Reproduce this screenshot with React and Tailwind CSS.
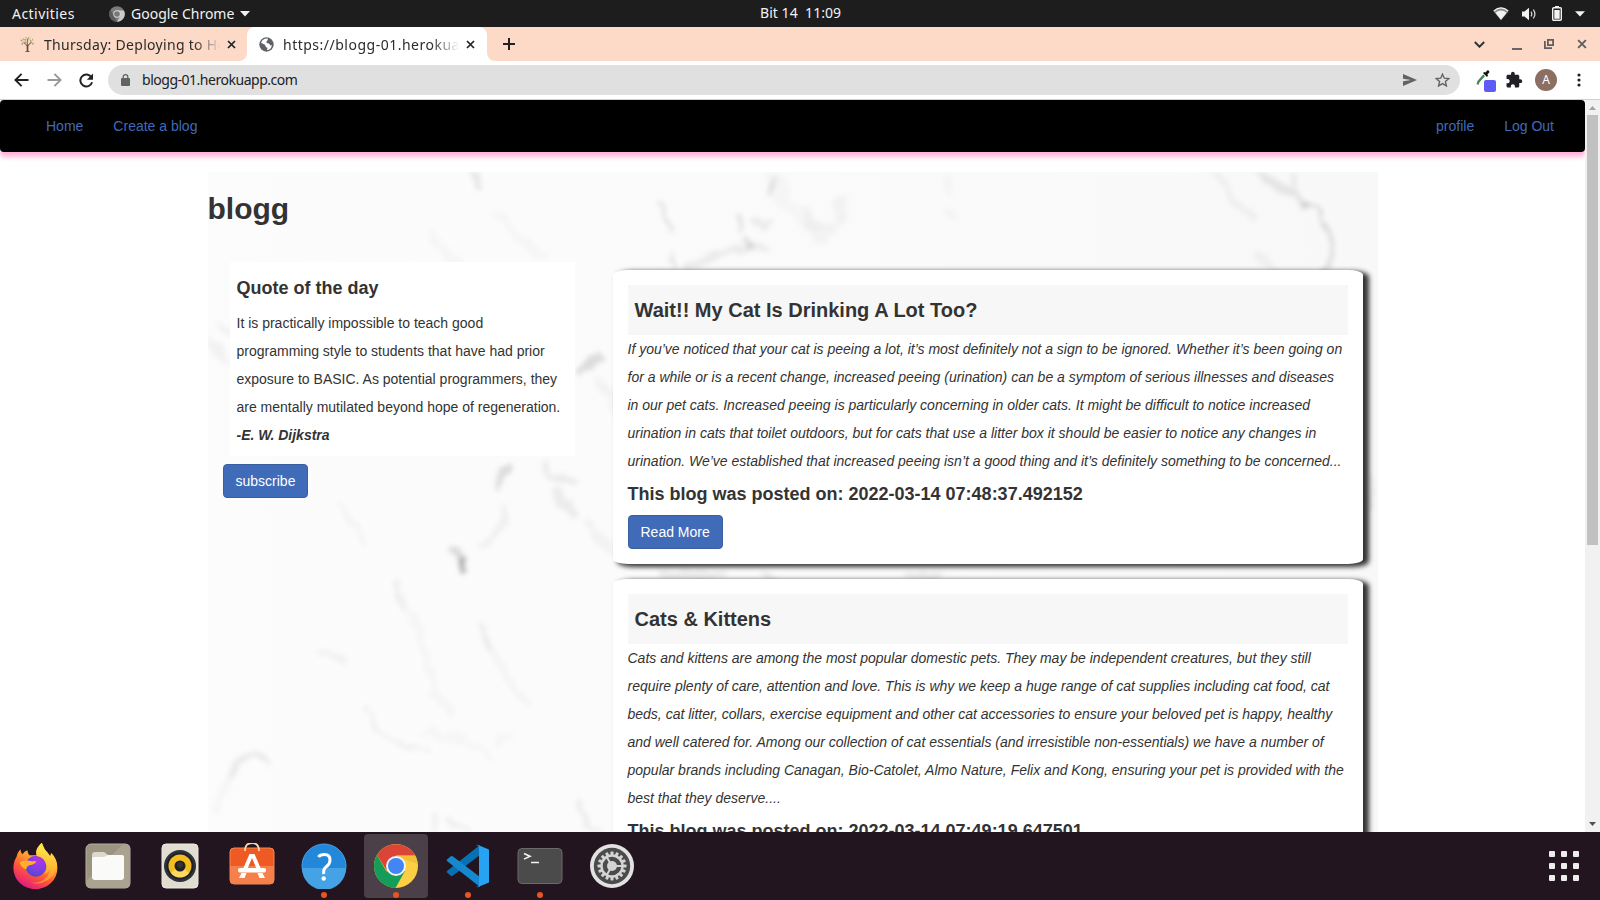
const UI = "font-['Noto_Sans',sans-serif]";

function TopBar() {
  return (
    <div className="relative flex h-[27px] shrink-0 items-center bg-[#1d1d1d] text-[14px] leading-[27px] text-[#f2f2f2]">
      <span className="ml-3 w-[97px] tracking-[0.45px]">Activities</span>
      <svg className="h-4 w-4" viewBox="0 0 16 16">
        <circle cx="8" cy="8" r="7.8" fill="#7b7b7b" />
        <path d="M8 4.4h6.9A7.8 7.8 0 0 1 8 15.8L11.2 10z" fill="#c9c9c9" />
        <path d="M1.4 3.8L4.8 9.8 8 15.8A7.8 7.8 0 0 1 1.4 3.8z" fill="#5c5c5c" />
        <circle cx="8" cy="8" r="3.7" fill="#d8d8d8" />
        <circle cx="8" cy="8" r="2.8" fill="#777" />
      </svg>
      <span className="ml-1.5 w-[106px] whitespace-nowrap">Google Chrome</span>
      <svg className="ml-[3px] h-[6px] w-[10px]" viewBox="0 0 10 6"><path d="M0 0h10L5 5.5z" fill="#f2f2f2" /></svg>
      <span className="absolute left-[760px] top-[-1px] whitespace-pre tracking-[0.05px]">Bit 14  11:09</span>
      <div className="ml-auto flex items-center">
        <svg className="h-[14px] w-[16px]" viewBox="0 0 16 14">
          <path d="M.3 4Q8-3 15.700 4L8 13.200z" fill="#8d8d8d" />
          <path d="M.8 4Q8-2.400 15.200 4" fill="none" stroke="#f2f2f2" strokeWidth="1.200" />
          <path d="M2.400 5.800Q8 1.400 13.600 5.800L8 12.800z" fill="#f2f2f2" />
        </svg>
        <svg className="ml-[13px] h-[14px] w-[15px]" viewBox="0 0 15 14" fill="none">
          <path d="M0 4.500h2.500L7 .8v12.400L2.500 9.500H0z" fill="#f2f2f2" />
          <path d="M9 4.600q1.600 2.400 0 4.800M11.300 2.600q3.200 4.400 0 8.800" stroke="#d0d0d0" strokeWidth="1.300" />
        </svg>
        <svg className="ml-[15px] h-[15px] w-[10px]" viewBox="0 0 10 15">
          <path d="M3 0h4v1.500H3z" fill="#f2f2f2" />
          <rect x=".7" y="1.700" width="8.600" height="12.600" rx="1" fill="none" stroke="#f2f2f2" strokeWidth="1.400" />
          <path d="M2.300 4h5.400v8.800H2.300z" fill="#f2f2f2" />
        </svg>
        <svg className="ml-[13px] mr-[15px] h-[6px] w-[10px]" viewBox="0 0 10 6"><path d="M0 .3h10L5 5.500z" fill="#f2f2f2" /></svg>
      </div>
    </div>
  );
}

function Cross({ className, color = "#222" }) {
  return (
    <svg className={className} viewBox="0 0 9 9"><path d="M1 1l7 7M8 1l-7 7" stroke={color} strokeWidth="1.700" /></svg>
  );
}

function Tabs() {
  return (
    <div className="h-[34px] shrink-0 bg-white text-[14px] text-[#2b2b2b]">
      <div className="flex h-full items-stretch">
        <div className="flex w-[247px] shrink-0 items-center rounded-br-[8px] bg-[#fddac7]">
          <svg className="ml-[20px] h-[16px] w-[16px] shrink-0" viewBox="0 0 16 16" fill="none">
            <path d="M7.500 15.500V8M7.500 10L3.500 6M7.500 10L11.500 6M7.500 8V3" stroke="#8d7a5c" strokeWidth="1.100" />
            <path d="M7.500 15.500V9" stroke="#5d4737" strokeWidth="1.600" />
            <path d="M1 5l3-2M3 8l-2-.5M5 4.500l1.500-3M8 3l2-2M10 5l3-1.500M12 8l2.500-1M6 7l-1-2" stroke="#a9a77a" strokeWidth="2" strokeDasharray="1.500 1" />
            <path d="M5.500 15.500h4" stroke="#6d5743" />
          </svg>
          <div className="ml-2 w-[178px] shrink-0 overflow-hidden whitespace-nowrap tracking-[0.3px] [mask-image:linear-gradient(to_right,#000_150px,transparent_176px)]">Thursday: Deploying to Heroku</div>
          <Cross className="ml-[5px] h-[9px] w-[9px] shrink-0" />
        </div>
        <div className="w-[240px] shrink-0 bg-[#fddac7]">
          <div className="flex h-full items-center rounded-t-[8px] bg-white">
            <svg className="ml-[12px] h-[15px] w-[15px] shrink-0" viewBox="0 0 15 15">
              <circle cx="7.500" cy="7.500" r="7.200" fill="#5f6368" />
              <path d="M5.800 1.800L9 1.600 9 3.500 7.500 4.600 7.600 6 10 6.500 11.500 8.500 13 8.200Q12.500 11 10.300 12.600L8 13.200 8.500 11 6.700 9.700 6 7.800 2 5.800Q3 2.800 5.800 1.800z" fill="#fff" />
              <path d="M9 1.600l3.300 2.300.9 3-1.700.4L9.800 5.500 8 5z" fill="#5f6368" />
            </svg>
            <div className="ml-[9px] w-[176px] shrink-0 overflow-hidden whitespace-nowrap tracking-[0.5px] [mask-image:linear-gradient(to_right,#000_148px,transparent_176px)]">https://blogg-01.herokuapp.com</div>
            <Cross className="ml-[7px] h-[9px] w-[9px] shrink-0" />
          </div>
        </div>
        <div className="flex flex-1 items-center rounded-bl-[8px] bg-[#fddac7]">
          <svg className="ml-[16px] h-[12px] w-[12px]" viewBox="0 0 12 12"><path d="M6 0v12M0 6h12" stroke="#222" strokeWidth="2" /></svg>
          <svg className="ml-auto h-[7px] w-[11px]" viewBox="0 0 11 7" fill="none"><path d="M.8 1l4.700 4.700L10.200 1" stroke="#333" strokeWidth="2" /></svg>
          <span className="ml-[27px] mt-[9px] h-[2px] w-[10px] bg-[#666]" />
          <svg className="ml-[22px] h-[10px] w-[10px]" viewBox="0 0 10 10" fill="none" stroke="#5f5f5f" strokeWidth="1.800"><path d="M3.900.9h5.200v5.200H3.900zM.9 2v7.100H8" /></svg>
          <Cross className="ml-[23px] mr-[13px] h-[10px] w-[10px]" color="#5f5f5f" />
        </div>
      </div>
    </div>
  );
}

function Toolbar() {
  return (
    <div className="flex h-[39px] shrink-0 items-center border-b border-[#cdd0d3] bg-white">
      <svg className="ml-[14px] h-[14px] w-[15px]" viewBox="0 0 15 14" fill="none" stroke="#222" strokeWidth="1.900"><path d="M14.500 7H1.500M7.600.8L1.400 7l6.200 6.200" /></svg>
      <svg className="ml-[18px] h-[14px] w-[15px]" viewBox="0 0 15 14" fill="none" stroke="#999" strokeWidth="1.900"><path d="M.5 7h13M7.400.8L13.600 7l-6.200 6.200" /></svg>
      <svg className="ml-[17px] h-[15px] w-[15px]" viewBox="0 0 15 15"><path d="M12.400 4.200A6 6 0 1 0 13.100 9.300" fill="none" stroke="#222" strokeWidth="2" /><path d="M14 .5v6.300H7.800z" fill="#222" /></svg>
      <div className="ml-[14px] flex h-[30px] w-[1352px] items-center rounded-full bg-[#e0e0e0]">
        <svg className="ml-[13px] h-[12px] w-[9px]" viewBox="0 0 9 12"><rect y="4" width="9" height="8" rx="1" fill="#5f6368" /><path d="M2.200 4.500V3a2.300 2.300 0 0 1 4.600 0v1.500" fill="none" stroke="#5f6368" strokeWidth="1.300" /></svg>
        <span className="ml-[12px] text-[14px] leading-[30px] tracking-[-0.48px] text-[#202124]">blogg-01.herokuapp.com</span>
        <svg className="ml-auto h-[12px] w-[14px]" viewBox="0 0 14 12"><path d="M0 0l14 6-14 6V7.200L8 6 0 4.800z" fill="#5f6368" /></svg>
        <svg className="ml-[18px] mr-[10px] h-[14px] w-[15px]" viewBox="0 0 15 14"><path d="M7.500 1.200l1.800 4 4.500.4-3.400 3 1 4.300-3.900-2.300-3.900 2.300 1-4.300-3.400-3 4.500-.4z" fill="none" stroke="#5f6368" strokeWidth="1.400" /></svg>
      </div>
      <div className="relative ml-[16px] h-[20px] w-[20px]">
        <svg className="h-[16px] w-[14px]" viewBox="0 0 14 16"><path d="M1.600 14.500L2.400 11.600 8 5.300" fill="none" stroke="#5f7a68" strokeWidth="2.200" /><path d="M2 14L3 12 8.500 6" fill="none" stroke="#2c9a4a" strokeWidth="1" /><path d="M7 3l4 4 1-1.500-.6-1 2-2.200Q13.500.2 11.500.3L9.400 2.500 8.300 2z" fill="#111" /></svg>
        <span className="absolute left-[8px] top-[10px] h-[12px] w-[12px] rounded-[2px] bg-[#5e5cf5]" />
      </div>
      <svg className="ml-[9px] h-[18px] w-[18px]" viewBox="0 0 24 24" fill="#202124"><path d="M20.500 11H19V7c0-1.100-.9-2-2-2h-4V3.500a2.500 2.500 0 0 0-5 0V5H4c-1.100 0-1.990.9-1.990 2v3.800H3.500c1.490 0 2.700 1.210 2.700 2.700s-1.210 2.700-2.700 2.700H2V20c0 1.100.9 2 2 2h3.800v-1.500c0-1.490 1.210-2.700 2.700-2.700s2.700 1.210 2.700 2.700V22H17c1.100 0 2-.9 2-2v-4h1.500a2.500 2.500 0 0 0 0-5z" /></svg>
      <span className="ml-[12px] flex h-[22px] w-[22px] items-center justify-center rounded-full bg-[#8d6e63] text-[12px] text-white">A</span>
      <svg className="ml-[20px] h-[14px] w-[4px]" viewBox="0 0 4 14" fill="#222"><circle cx="2" cy="2" r="1.600" /><circle cx="2" cy="7" r="1.600" /><circle cx="2" cy="12" r="1.600" /></svg>
    </div>
  );
}

const VEINS = [
  ["M265 0q3 8 6 12", 8, 0.08],
  ["M226 60q6 20 24 32M290 40q20 24 44 44", 10, 0.02],
  ["M563 8v14", 5, 0.1],
  ["M575 20q14 22 34 36M560 0q8 8 16 30", 14, 0.02],
  ["M531 46v10M535 66l5 8", 5, 0.12],
  ["M545 50l12 4M480 96q20-14 56-20h22", 9, 0.06],
  ["M465 80v18M462 60q-4-20-12-30", 4, 0.1],
  ["M610 60l14-6M632 30v14M600 40l10 30", 12, 0.03],
  ["M742 6v12M740 40l4 6", 10, 0.025],
  ["M1010 4q18 30 34 40M1050 84l20 16", 7, 0.04],
  ["M1048 0q20 12 32 20t18 12", 8, 0.075],
  ["M1086 0v18", 5, 0.06],
  ["M1098 30q18 14 24 34t-6 34", 4, 0.12],
  ["M14 150q10 14 14 18M0 170l20 18", 8, 0.04],
  ["M373 200q8-10 16-16", 7, 0.12],
  ["M390 210q14 10 20 30", 9, 0.03],
  ["M294 318q-4-16 8-22", 5, 0.12],
  ["M334 292q2 14 30 18M350 320l14 20", 9, 0.06],
  ["M296 335q0 20-8 26t-14 12", 7, 0.045],
  ["M244 378q8 6 10 14", 5, 0.12],
  ["M256 390v9", 6, 0.28],
  ["M130 330q12 20 28 38", 6, 0.03],
  ["M190 408q4 24 16 44t14 46 26 44", 8, 0.022],
  ["M191 412q1 14 5 20", 5, 0.04],
  ["M270 450q8 20 16 34t30 44", 7, 0.028],
  ["M270 454q5 14 12 22", 5, 0.045],
  ["M110 482q12-6 28 6", 6, 0.04],
  ["M160 536q8 26 22 34t40 8", 5, 0.04],
  ["M58 590q-20-14-34 12t-16 40", 8, 0.025],
  ["M58 588q-20-10-36 18", 5, 0.06],
  ["M220 560q50 10 60 24M290 570l10-6", 8, 0.02],
  ["M228 644v24M240 648q20 8 30 20M370 630q8 24 24 36", 5, 0.06],
  ["M380 350q20 20 24 30", 8, 0.03],
  ["M455 402h60M555 404h10M700 404h30", 8, 0.06],
  ["M1165 310v26", 8, 0.05],
];

function Marble() {
  return (
    <svg className="absolute inset-0 h-[660px] w-[1170px]" viewBox="0 0 1170 660" fill="none" stroke="#000">
      <defs>
        <filter id="soft" x="0" y="0" width="1170" height="660" filterUnits="userSpaceOnUse">
          <feTurbulence type="fractalNoise" baseFrequency=".05" numOctaves="3" seed="4" result="noise" />
          <feDisplacementMap in="SourceGraphic" in2="noise" scale="16" xChannelSelector="R" yChannelSelector="G" />
          <feGaussianBlur stdDeviation="2.800" />
        </filter>
        <linearGradient id="shade"><stop offset="0" stopColor="#fcfcfc" /><stop offset=".6" stopColor="#fafafa" /><stop offset="1" stopColor="#f8f8f8" /></linearGradient>
      </defs>
      <rect width="1170" height="660" fill="url(#shade)" stroke="none" />
      <g filter="url(#soft)" strokeLinecap="round">
        {VEINS.map(([d, w, o]) => <path key={d} d={d} strokeWidth={w} strokeOpacity={o} />)}
      </g>
    </svg>
  );
}

const BUTTON = "inline-block h-[34px] rounded-[4px] border border-[#3a5f9f] bg-[#406bb8] px-3 py-1.5 text-[14px] leading-5 text-white";

function Post({ title, lines, date }) {
  return (
    <article className="mb-[15px] rounded-[15px/5px] bg-white p-[15px] shadow-[5px_2px_5px_1px_#333]">
      <h3 className="h-[50px] bg-[#f7f7f7] px-[7px] text-[20px] font-bold leading-[50px]">{title}</h3>
      <p className="text-[14px] italic leading-[28px]">
        {lines.map((line) => <span key={line} className="block whitespace-nowrap">{line}</span>)}
      </p>
      <h4 className="my-[9px] text-[18px] font-bold leading-[20px]">This blog was posted on: {date}</h4>
      <button className={BUTTON + " mt-[2px] block"}>Read More</button>
    </article>
  );
}

const POSTS = [
  {
    title: "Wait!! My Cat Is Drinking A Lot Too?",
    date: "2022-03-14 07:48:37.492152",
    lines: [
      "If you’ve noticed that your cat is peeing a lot, it’s most definitely not a sign to be ignored. Whether it’s been going on",
      "for a while or is a recent change, increased peeing (urination) can be a symptom of serious illnesses and diseases",
      "in our pet cats. Increased peeing is particularly concerning in older cats. It might be difficult to notice increased",
      "urination in cats that toilet outdoors, but for cats that use a litter box it should be easier to notice any changes in",
      "urination. We’ve established that increased peeing isn’t a good thing and it’s definitely something to be concerned...",
    ],
  },
  {
    title: "Cats & Kittens",
    date: "2022-03-14 07:49:19.647501",
    lines: [
      "Cats and kittens are among the most popular domestic pets. They may be independent creatures, but they still",
      "require plenty of care, attention and love. This is why we keep a huge range of cat supplies including cat food, cat",
      "beds, cat litter, collars, exercise equipment and other cat accessories to ensure your beloved pet is happy, healthy",
      "and well catered for. Among our collection of cat essentials (and irresistible non-essentials) we have a number of",
      "popular brands including Canagan, Bio-Catolet, Almo Nature, Felix and Kong, ensuring your pet is provided with the",
      "best that they deserve....",
    ],
  },
];

function Page() {
  return (
    <div className="flex h-[732px] shrink-0 overflow-hidden bg-white font-['Liberation_Sans',Arial,sans-serif] text-[#333]">
      <div className="h-full w-[1585px] overflow-hidden">
        <nav className="flex h-[52px] items-center rounded-[4px] bg-black px-[31px] text-[14px] text-[#406bb8] shadow-[0_5px_5px_#ffb3d9]">
          <a className="px-[15px]">Home</a>
          <a className="px-[15px]">Create a blog</a>
          <a className="ml-auto px-[15px]">profile</a>
          <a className="pl-[15px]">Log Out</a>
        </nav>
        <main className="relative mx-auto mt-[20px] h-[660px] w-[1170px]">
          <Marble />
          <div className="relative">
            <h1 className="h-[90px] pt-[20px] text-[30px] font-bold leading-[33px]">blogg</h1>
            <div className="flex items-start">
              <aside className="w-[367px]">
                <div className="ml-[22px] h-[194px] w-[345px] bg-white px-[7px] pt-[16px]">
                  <h4 className="text-[18px] font-bold leading-[20px]">Quote of the day</h4>
                  <p className="mt-[11px] text-[14px] leading-[28px]">It is practically impossible to teach good<br />programming style to students that have had prior<br />exposure to BASIC. As potential programmers, they<br />are mentally mutilated beyond hope of regeneration.</p>
                  <p className="text-[14px] font-bold italic leading-[28px]">-E. W. Dijkstra</p>
                </div>
                <button className={BUTTON + " ml-[15px] mt-[8px]"}>subscribe</button>
              </aside>
              <section className="ml-[38px] mt-[8px] w-[750px]">
                {POSTS.map((post) => <Post key={post.title} {...post} />)}
              </section>
            </div>
          </div>
        </main>
      </div>
      <div className="flex w-[15px] flex-col items-center bg-[#f1f1f1]">
        <svg className="h-[15px] w-[15px]" viewBox="0 0 15 15"><path d="M4 10h7L7.500 6z" fill="#a3a3a3" /></svg>
        <div className="h-[430px] w-[11px] bg-[#c1c1c1]" />
        <svg className="mt-auto h-[15px] w-[15px]" viewBox="0 0 15 15"><path d="M4 5h7L7.500 9z" fill="#505050" /></svg>
      </div>
    </div>
  );
}

const gear = Array.from({ length: 16 }, (_, i) => i * 22.5);

const APPS = [
  { name: "firefox", icon: (
    <>
      <defs>
        <linearGradient id="ff" x1=".8" y1="0" x2=".3" y2="1"><stop offset="0" stopColor="#fff44f" /><stop offset=".35" stopColor="#ffb02e" /><stop offset=".65" stopColor="#ff5a36" /><stop offset="1" stopColor="#e31587" /></linearGradient>
        <radialGradient id="ffp" cx=".6" cy=".2" r=".9"><stop offset="0" stopColor="#b833e1" /><stop offset=".6" stopColor="#7542e5" /><stop offset="1" stopColor="#4a4ab0" /></radialGradient>
        <linearGradient id="fft" x1="0" y1="0" x2="0" y2="1"><stop offset="0" stopColor="#fff14a" /><stop offset="1" stopColor="#ff9a2a" /></linearGradient>
      </defs>
      <g transform="translate(-.6 -.8)">
        <path d="M4 15q1-5 4-8 0 3 2 5 2-3 5-4 0 3 2 5h7q-1-7 5.500-12.500Q30 6 35 10l3 4q1-1 1-3 6 6 6 15a22 21 0 0 1-44 0q0-7 3-11z" fill="url(#ff)" />
        <circle cx="23.500" cy="24" r="10.500" fill="url(#ffp)" />
        <path d="M29.500.5Q21 8 25 14q7 1 9 9 1 6-3 9 5-1 7-6-1 9-9 13-8 3-14 0 10 5 20-1 10-6 9.500-16-1-7-6-11.500 0 2-1 3.500Q32 8 29.500.5z" fill="url(#fft)" opacity=".85" />
        <path d="M7 20q6-3 12-1h5q-1 3-7 4-3 1-3 4-5-1-7-7z" fill="#ffae2e" />
      </g>
    </>) },
  { name: "files", icon: (
    <>
      <rect x="1" y="1" width="44" height="44" rx="5" fill="#9b9481" stroke="#b5af9f" />
      <path d="M1 38L38 1h3q4 0 4 4v36q0 4-4 4H5q-4 0-4-4z" fill="#aaa38f" />
      <path d="M7 12q0-3 3-3h9l4 3h13q3 0 3 3v8H7z" fill="#ddd8cb" />
      <path d="M7 16q0-2 2-2h10l4-2h14q2 0 2 2v20q0 3-3 3H10q-3 0-3-3z" fill="#fafaf9" />
    </>) },
  { name: "rhythmbox", icon: (
    <>
      <rect x="5" y="1" width="36" height="44" rx="4" fill="#e2ddd1" stroke="#eeeae2" />
      <circle cx="23" cy="23" r="16" fill="#30323a" /><circle cx="23" cy="23" r="13.500" fill="#1e2028" />
      <circle cx="23" cy="23" r="11.500" fill="#f2bd1d" /><path d="M14 30a11.500 11.500 0 0 0 18 0L25 24h-4z" fill="#ffd765" />
      <circle cx="23" cy="23" r="5.500" fill="#202020" /><circle cx="23" cy="22" r="3" fill="#333" />
    </>) },
  { name: "software", icon: (
    <>
      <rect x="1" y="5" width="44" height="36" rx="4" fill="#ef5a24" stroke="#f58658" /><path d="M1 23h44v14q0 4-4 4H5q-4 0-4-4z" fill="#f5804c" />
      <path d="M16 8Q16 0 23 0t7 8" fill="none" stroke="#f8d8a6" strokeWidth="1.800" />
      <path d="M20.500 11h5L32 26h-4.300L23 15l-4.700 11H14zM12.500 30h5l-2 5h-5.500zM28.500 30h5l2.500 5h-5.500z" fill="#fff" />
      <rect x="9" y="25" width="28" height="4.500" rx="2" fill="#fff" />
    </>) },
  { name: "help", dot: true, icon: (
    <>
      <circle cx="23" cy="23" r="22" fill="#2488da" stroke="#48a2e8" /><path d="M1 25a22 22 0 0 0 44 0z" fill="#45a2e4" />
      <path d="M17.500 14Q19 11.500 23.500 11.500 29 11.500 29 17q0 4-3.500 6.500T22.700 31" fill="none" stroke="#fff" strokeWidth="3" /><circle cx="22.700" cy="35.500" r="2.200" fill="#fff" />
    </>) },
  { name: "chrome", dot: true, active: true, icon: (
    <>
      <circle cx="23" cy="23" r="22" fill="#fdd043" />
      <path d="M4 12A22 22 0 0 1 42.200 12.500H23L14 28z" fill="#db4437" />
      <path d="M4 12a22 22 0 0 0 18.500 33l9.500-17-9-1-9.500 1.500z" fill="#149c58" />
      <path d="M23 12.500h19.200q2 4 1.800 8L26 15z" fill="#e9b62e" opacity=".6" />
      <circle cx="23" cy="23" r="10" fill="#f3f3f3" /><circle cx="23" cy="23" r="8" fill="#4285f4" />
    </>) },
  { name: "code", dot: true, icon: (
    <>
      <path d="M2 29.500l3.500 3q1 1 2.500 0L35 12V2L2 28q-.8.800 0 1.500z" fill="#0870b4" />
      <path d="M2 16.500l3.500-3q1-1 2.500 0L35 34v10L2 18q-.8-.8 0-1.500z" fill="#1688d0" />
      <path d="M33 2l11 4.500v33L33 44q-1 .5-2-.5 2.500 1 3-2v-37q-.5-3-3-2 1-1 2-.5z" fill="#27a3f2" />
    </>) },
  { name: "terminal", dot: true, icon: (
    <>
      <rect x="1" y="5.500" width="44" height="35" rx="4" fill="#4b4b4b" stroke="#6a6a6a" />
      <path d="M7 10.500l6 2.800-6 2.800M14 19.500h8" fill="none" stroke="#f4f4f4" strokeWidth="1.600" />
    </>) },
  { name: "settings", icon: (
    <>
      <circle cx="23" cy="23" r="22" fill="#e2e2e2" /><circle cx="23" cy="23" r="18.200" fill="#4b4b4b" />
      {gear.map((a) => <rect key={a} x="21.500" y="8.500" width="3" height="4" rx=".7" fill="#d4d4d4" transform={`rotate(${a} 23 23)`} />)}
      <circle cx="23" cy="23" r="10.500" fill="none" stroke="#d4d4d4" strokeWidth="2.400" />
      <circle cx="23" cy="23" r="5" fill="#d4d4d4" />
      <path d="M23 23h10M23 23l-5-8.500M23 23l-5 8.500" stroke="#d4d4d4" strokeWidth="2" />
    </>) },
];

function Dock() {
  return (
    <footer className="flex h-[68px] shrink-0 items-start bg-[#23151f]">
      {APPS.map(({ name, icon, dot, active }) => (
        <div key={name} className="flex h-[68px] w-[72px] flex-col items-center pt-[2px]">
          <div className={"flex h-[64px] w-[64px] flex-col items-center rounded-[4px] pt-[9px] " + (active ? "bg-[#4c4048]" : "")}>
            <svg className="h-[46px] w-[46px] shrink-0" viewBox="0 0 46 46">{icon}</svg>
            {dot && <span className="mt-[3px] h-[6px] w-[6px] shrink-0 rounded-full bg-[#e95420]" />}
          </div>
        </div>
      ))}
      <div className="ml-auto mr-[21px] mt-[19px] grid grid-cols-3 gap-[6px]">
        {gear.slice(0, 9).map((key) => <span key={key} className="h-[6px] w-[6px] rounded-[1px] bg-[#eeecec]" />)}
      </div>
    </footer>
  );
}

export default function App() {
  return (
    <div className={"flex h-[900px] w-[1600px] flex-col overflow-hidden " + UI}>
      <TopBar />
      <Tabs />
      <Toolbar />
      <Page />
      <Dock />
    </div>
  );
}
